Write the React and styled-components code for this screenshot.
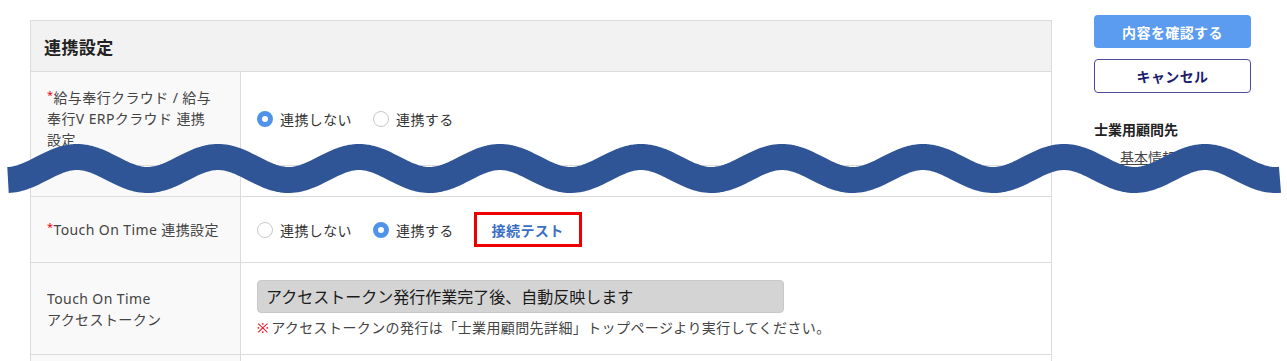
import React from "react"
import styled, { createGlobalStyle } from "styled-components"

const GlobalStyle = createGlobalStyle`
  body {
    margin: 0;
    background: #fff;
    color: #333;
    font-family: "Noto Sans", "Noto Sans CJK JP", sans-serif;
  }
`

const Page = styled.div`
  position: relative;
  display: flex;
  align-items: flex-start;
  gap: 42px;
  height: 361px;
  padding: 15px 0 0 30px;
  box-sizing: border-box;
  overflow: hidden;
`

const Section = styled.div`
  width: 1022px;
  margin-top: 5px;
  border: 1px solid #dcdcdc;
  border-bottom: none;
  box-sizing: border-box;
  flex-shrink: 0;
`

const SectionHeader = styled.div`
  height: 50px;
  display: flex;
  align-items: center;
  padding-left: 13px;
  background: #f2f2f2;
  border-bottom: 1px solid #dcdcdc;
  font-size: 17px;
  font-weight: 700;
  letter-spacing: 0.4px;
  color: #222;
`

const Row = styled.div`
  display: grid;
  grid-template-columns: 210px 1fr;
  height: ${p => p.h}px;
  border-bottom: 1px solid #dcdcdc;
`

const Label = styled.div`
  display: flex;
  align-items: center;
  padding: 0 12px 0 16px;
  background: #f9f9f9;
  border-right: 1px solid #dcdcdc;
  font-size: 14px;
  line-height: 21px;
  letter-spacing: 0.4px;
  color: #444;
`

const Required = styled.span`
  color: #e60012;
  font-size: 11px;
  vertical-align: top;
  line-height: 16px;
`

const Value = styled.div`
  display: flex;
  flex-direction: ${p => (p.column ? "column" : "row")};
  align-items: ${p => (p.column ? "flex-start" : "center")};
  justify-content: ${p => (p.column ? "center" : "flex-start")};
  padding: 0 16px;
  font-size: 14px;
  letter-spacing: 0.4px;
`

const RadioGroup = styled.div`
  display: flex;
  align-items: center;
  gap: 21px;
`

const RadioItem = styled.label`
  display: flex;
  align-items: center;
  gap: 7px;
  color: #333;
`

const RadioCircle = styled.span`
  width: 16px;
  height: 16px;
  border-radius: 50%;
  box-sizing: border-box;
  background: #fff;
  border: ${p => (p.checked ? "5px solid #4f94ea" : "1px solid #c8c8c8")};
`

const TestButton = styled.div`
  display: flex;
  align-items: center;
  height: 35px;
  margin-left: 20px;
  padding: 0 15px;
  border: 3px solid #ee0000;
  box-sizing: border-box;
  font-size: 14px;
  font-weight: 700;
  color: #3a6fc4;
`

const ReadonlyField = styled.div`
  width: 527px;
  height: 33px;
  display: flex;
  align-items: center;
  padding-left: 8px;
  box-sizing: border-box;
  background: #d4d4d4;
  border: 1px solid #c9c9c9;
  border-radius: 4px;
  font-size: 16px;
  letter-spacing: 0;
  color: #1a1a1a;
`

const Note = styled.div`
  margin-top: 5px;
  line-height: 20px;
  color: #444;
`

const Mark = styled.span`
  color: #e60012;
  margin-right: 2px;
`

const Sidebar = styled.div`
  width: 157px;
  display: flex;
  flex-direction: column;
  flex-shrink: 0;
`

const Button = styled.div`
  height: ${p => (p.primary ? 33 : 34)}px;
  margin-top: ${p => (p.primary ? 0 : 11)}px;
  display: flex;
  align-items: center;
  justify-content: center;
  box-sizing: border-box;
  border-radius: 4px;
  font-size: 14px;
  font-weight: 700;
  letter-spacing: 0.4px;
  background: ${p => (p.primary ? "#5b9cf0" : "#fff")};
  color: ${p => (p.primary ? "#fff" : "#1c1c6e")};
  border: ${p => (p.primary ? "none" : "1px solid #4b4b9b")};
`

const SideHeading = styled.div`
  margin-top: 27px;
  font-size: 14px;
  font-weight: 700;
  line-height: 20px;
  color: #222;
`

const SideLink = styled.a`
  margin: 8px 0 0 26px;
  font-size: 14px;
  line-height: 20px;
  color: #444;
  text-decoration: underline;
`

const WaveLayer = styled.svg`
  position: absolute;
  left: 0;
  top: 0;
  pointer-events: none;
`

// cut mark drawn over the page
const Wave = () => {
  const pts = []
  for (let x = 8; x <= 1280; x += 2) {
    const y = 168.5 - 11.5 * Math.cos((2 * Math.PI * (x - 77)) / 141)
    pts.push(`${x},${y.toFixed(2)}`)
  }
  return (
    <WaveLayer width="1287" height="361" viewBox="0 0 1287 361">
      <polyline
        points={pts.join(" ")}
        fill="none"
        stroke="#2f5597"
        strokeWidth="26"
        strokeLinejoin="round"
      />
    </WaveLayer>
  )
}

const Radio = ({ checked, children }) => (
  <RadioItem>
    <RadioCircle checked={checked} />
    {children}
  </RadioItem>
)

export default function App() {
  return (
    <>
      <GlobalStyle />
      <Page>
        <Section>
          <SectionHeader>連携設定</SectionHeader>
          <Row h={93}>
            <Label>
              <div>
                <Required>*</Required>給与奉行クラウド / 給与<br />
                奉行V ERPクラウド 連携<br />
                設定
              </div>
            </Label>
            <Value>
              <RadioGroup>
                <Radio checked>連携しない</Radio>
                <Radio>連携する</Radio>
              </RadioGroup>
            </Value>
          </Row>
          <Row h={30}>
            <Label />
            <Value />
          </Row>
          <Row h={65}>
            <Label>
              <div>
                <Required>*</Required>Touch On Time 連携設定
              </div>
            </Label>
            <Value>
              <RadioGroup>
                <Radio>連携しない</Radio>
                <Radio checked>連携する</Radio>
              </RadioGroup>
              <TestButton>接続テスト</TestButton>
            </Value>
          </Row>
          <Row h={91}>
            <Label>
              <div>
                Touch On Time<br />
                アクセストークン
              </div>
            </Label>
            <Value column>
              <ReadonlyField>アクセストークン発行作業完了後、自動反映します</ReadonlyField>
              <Note>
                <Mark>※</Mark>アクセストークンの発行は「士業用顧問先詳細」トップページより実行してください。
              </Note>
            </Value>
          </Row>
          <Row h={40}>
            <Label />
            <Value />
          </Row>
        </Section>
        <Sidebar>
          <Button primary>内容を確認する</Button>
          <Button>キャンセル</Button>
          <SideHeading>士業用顧問先</SideHeading>
          <SideLink>基本情報</SideLink>
        </Sidebar>
        <Wave />
      </Page>
    </>
  )
}
